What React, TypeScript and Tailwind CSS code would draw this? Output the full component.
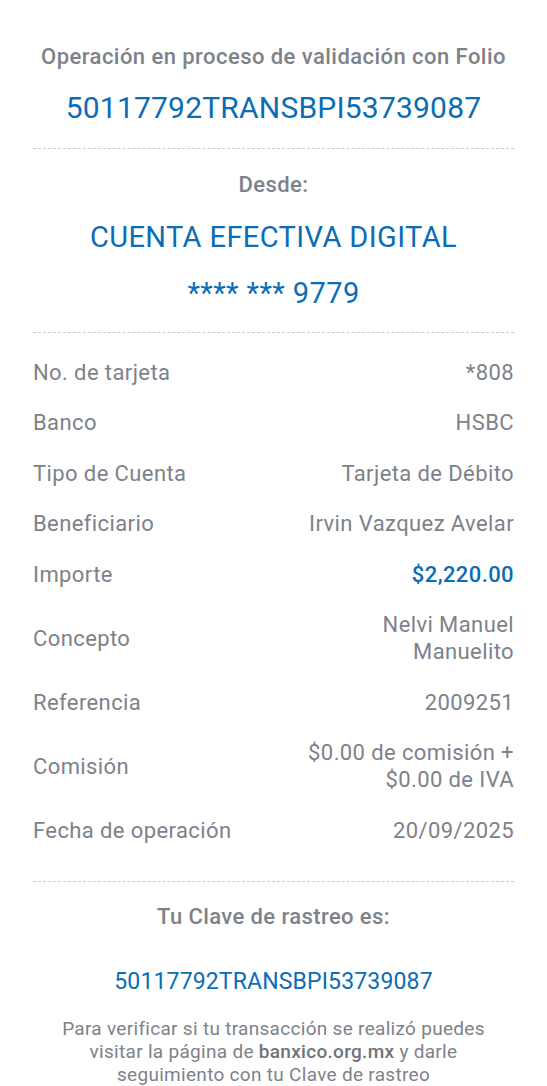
import React from "react";

interface IRow {
  label: string;
  value: React.ReactNode;
  highlight?: boolean;
}

const rows: IRow[] = [
  { label: "No. de tarjeta", value: "*808" },
  { label: "Banco", value: "HSBC" },
  { label: "Tipo de Cuenta", value: "Tarjeta de Débito" },
  { label: "Beneficiario", value: "Irvin Vazquez Avelar" },
  { label: "Importe", value: "$2,220.00", highlight: true },
  {
    label: "Concepto",
    value: (
      <>
        Nelvi Manuel
        <br />
        Manuelito
      </>
    ),
  },
  { label: "Referencia", value: "2009251" },
  {
    label: "Comisión",
    value: (
      <>
        $0.00 de comisión +
        <br />
        $0.00 de IVA
      </>
    ),
  },
  { label: "Fecha de operación", value: "20/09/2025" },
];

const Divider = () => (
  <div className="border-t border-dashed border-[#c9cbce] w-full" />
);

export default function App() {
  return (
    <div
      className="bg-white min-h-screen w-[547px] px-[33px] text-[#7d828a]"
      style={{ fontFamily: "Roboto, 'Liberation Sans', sans-serif" }}
    >
      {/* Header start */}
      <div className="pt-[43px] text-center">
        <div className="text-[22px] leading-[28px] font-medium tracking-[0.45px]">
          Operación en proceso de validación con Folio
        </div>
        <div className="mt-[19px] text-[30px] leading-[36px] tracking-[0.2px] text-[#0b6db5]">
          50117792TRANSBPI53739087
        </div>
      </div>
      <div className="mt-[22px]">
        <Divider />
      </div>

      {/* Desde */}
      <div className="text-center">
        <div className="mt-[22px] text-[22px] leading-[28px] font-medium tracking-[0.4px]">
          Desde:
        </div>
        <div className="mt-[21px] text-[29px] leading-[34px] tracking-[0.4px] text-[#0b6db5]">
          CUENTA EFECTIVA DIGITAL
        </div>
        <div className="mt-[22px] text-[29px] leading-[34px] tracking-[0.4px] text-[#0b6db5]">
          **** *** 9779
        </div>
      </div>
      <div className="mt-[22px]">
        <Divider />
      </div>

      {/* Details */}
      <div className="mt-[14px]">
        {rows.map((row) => (
          <div
            key={row.label}
            className="flex justify-between items-center py-[11.75px] text-[22px] leading-[27px] tracking-[0.4px]"
          >
            <div>{row.label}</div>
            <div
              className={
                row.highlight
                  ? "text-right font-medium text-[#0b6db5]"
                  : "text-right"
              }
            >
              {row.value}
            </div>
          </div>
        ))}
      </div>
      <div className="mt-[25px]">
        <Divider />
      </div>

      {/* Clave de rastreo */}
      <div className="text-center pb-4">
        <div className="mt-[21px] text-[22px] leading-[28px] font-medium tracking-[0.4px]">
          Tu Clave de rastreo es:
        </div>
        <div className="mt-[36px] text-[23px] leading-[30px] tracking-[0.15px] text-[#0b6db5]">
          50117792TRANSBPI53739087
        </div>
        <p className="mt-[20px] mx-auto max-w-[450px] text-[19px] leading-[23px] tracking-[0.3px]">
          Para verificar si tu transacción se realizó puedes visitar la página
          de <span className="font-medium text-[#6f747b]">banxico.org.mx</span>{" "}
          y darle seguimiento con tu Clave de rastreo
        </p>
      </div>
    </div>
  );
}
